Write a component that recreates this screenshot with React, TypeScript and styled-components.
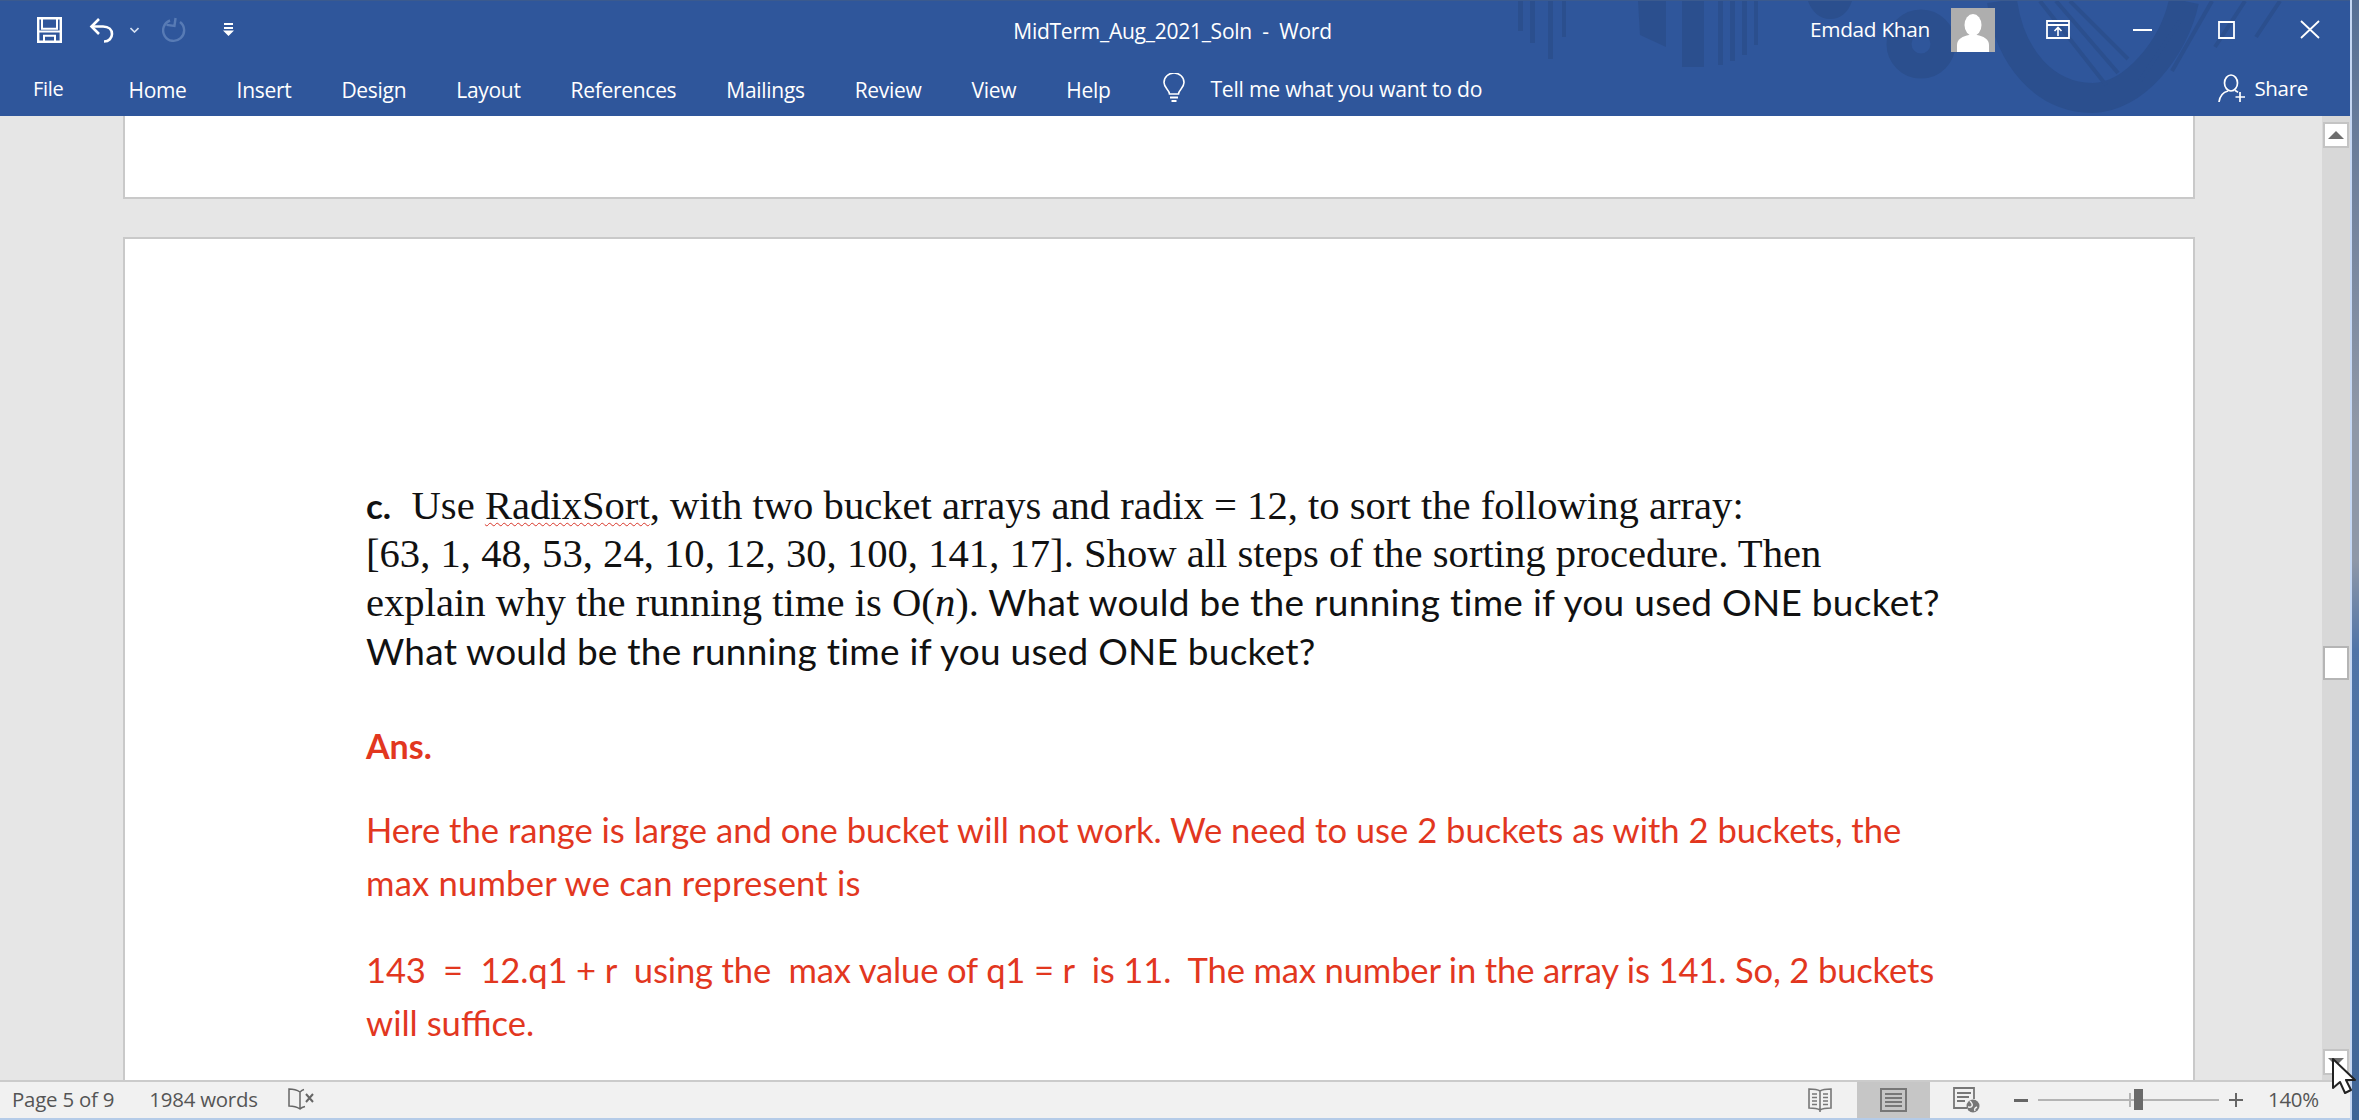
import React from 'react';
import styled, { createGlobalStyle } from 'styled-components';

const GlobalStyle = createGlobalStyle`
  html, body { margin: 0; padding: 0; background: #4a6b9a; overflow: hidden; }
  #root { width: 2359px; height: 1120px; }
`;

const Screen = styled.div`
  position: relative;
  display: grid;
  grid-template-columns: 2352px 7px;
  width: 2359px;
  height: 1120px;
  overflow: hidden;
`;

const DesktopEdge = styled.div`
  background: linear-gradient(180deg, #566f94 0%, #8f98a8 38%, #8f98a8 50%, #4f74a8 58%, #3f6596 100%);
`;

const WordWindow = styled.div`
  display: flex;
  flex-direction: column;
  height: 1120px;
  border-right: 2px solid #c4d6f2;
  box-sizing: border-box;
`;

const Header = styled.header`
  position: relative;
  height: 116px;
  flex: none;
  background: #2f569b;
  border-top: 1px solid #3b5a8e;
  box-sizing: border-box;
  color: #fff;
  font-family: 'Open Sans', 'Liberation Sans', sans-serif;
  overflow: hidden;
`;

const Art = styled.svg`
  position: absolute;
  left: 1500px;
  top: 0;
`;

const TitleRow = styled.div`
  position: relative;
  height: 57px;
  display: grid;
  grid-template-columns: 1fr auto 1fr;
  align-items: center;
`;

const QuickAccess = styled.div`
  display: flex;
  align-items: center;
  padding-left: 37px;
`;

const QatIcon = styled.svg<{ $ml: number }>`
  display: block;
  margin-left: ${(p) => p.$ml}px;
`;

const DocTitle = styled.div`
  font-size: 21px;
  letter-spacing: -0.25px;
  white-space: pre;
  padding: 2px 5px 0 0;
`;

const WindowControls = styled.div`
  display: flex;
  align-items: center;
  justify-content: flex-end;
  padding-right: 30px;
`;

const UserName = styled.span`
  font-size: 20.8px;
  letter-spacing: -0.3px;
  margin: -2px 21px 0 0;
`;

const Avatar = styled.svg`
  display: block;
  margin-right: 51px;
`;

const WinIcon = styled.svg<{ $mr: number }>`
  display: block;
  margin-right: ${(p) => p.$mr}px;
`;

const TabRow = styled.div`
  position: relative;
  height: 58px;
  display: flex;
  align-items: center;
  padding: 2px 0 0 33px;
  box-sizing: border-box;
`;

const FileTab = styled.span`
  font-size: 20px;
  letter-spacing: -0.3px;
  margin-right: 65px;
`;

const Tabs = styled.nav`
  display: flex;
  gap: 50px;
  margin-top: 3px;
`;

const Tab = styled.span`
  font-size: 21px;
  letter-spacing: -0.3px;
`;

const TellMe = styled.div`
  display: flex;
  align-items: center;
  gap: 24px;
  margin-left: 52px;
  font-size: 21.2px;
  letter-spacing: -0.25px;
`;

const ShareButton = styled.div`
  margin-left: auto;
  display: flex;
  align-items: center;
  gap: 7px;
  padding-right: 42px;
  font-size: 20.5px;
  letter-spacing: -0.3px;
`;

const Body = styled.div`
  flex: 1;
  min-height: 0;
  display: flex;
  overflow: hidden;
`;

const Canvas = styled.main`
  flex: 1;
  min-width: 0;
  padding-left: 123px;
  background: #e6e6e6;
  overflow: hidden;
`;

const PageTail = styled.div`
  box-sizing: border-box;
  width: 2072px;
  height: 83px;
  margin-bottom: 38px;
  background: #fff;
  border: 2px solid #c9c9c9;
  border-top: none;
`;

const Page = styled.article`
  box-sizing: border-box;
  width: 2072px;
  height: 1100px;
  background: #fff;
  border: 2px solid #c9c9c9;
  padding: 242px 0 0 241px;
`;

const SerifLine = styled.div`
  font-family: 'Liberation Serif', 'Times New Roman', serif;
  font-size: 40.65px;
  line-height: 48.5px;
  height: 48.5px;
  color: #111;
  white-space: pre;
`;

const Bold = styled.b`
  font-family: Lato, 'Open Sans', sans-serif;
  font-size: 35px;
`;

const Spelled = styled.span`
  text-decoration: underline wavy #d8362a 1px;
  text-underline-offset: 3px;
`;

const Sans = styled.span`
  font-family: Lato, 'Open Sans', sans-serif;
  font-size: 37px;
  letter-spacing: 0.28px;
`;

const SansLine = styled.div`
  font-family: Lato, 'Open Sans', sans-serif;
  font-size: 37px;
  letter-spacing: 0.24px;
  line-height: 48.5px;
  color: #111;
  white-space: pre;
`;

const AnsLabel = styled.div`
  font-family: Lato, 'Open Sans', sans-serif;
  font-size: 34px;
  font-weight: 700;
  line-height: 48px;
  color: #e2371f;
  margin-top: 47px;
`;

const AnswerBlock = styled.div<{ $mt: number }>`
  margin-top: ${(p) => p.$mt}px;
`;

const RedLine = styled.div<{ $spacing?: number }>`
  font-family: Lato, 'Open Sans', sans-serif;
  font-size: 34.6px;
  letter-spacing: ${(p) => p.$spacing ?? 0}px;
  line-height: 53px;
  color: #e2371f;
  white-space: pre;
`;

const Scrollbar = styled.aside`
  width: 28px;
  flex: none;
  box-sizing: border-box;
  padding: 6px 1px 5px;
  display: flex;
  flex-direction: column;
  align-items: center;
  background: #d8d8d8;
`;

const ScrollButton = styled.div`
  box-sizing: border-box;
  width: 26px;
  height: 26px;
  flex: none;
  display: flex;
  align-items: center;
  justify-content: center;
  background: #fff;
  border: 2px solid #c4c4c4;
`;

const ScrollThumb = styled.div`
  box-sizing: border-box;
  width: 26px;
  height: 34px;
  flex: none;
  margin: 498px 0 auto;
  background: #fff;
  border: 2px solid #b5b5b5;
`;

const StatusBar = styled.footer`
  height: 40px;
  flex: none;
  box-sizing: border-box;
  display: flex;
  align-items: stretch;
  background: #f1f1f1;
  border-top: 2px solid #cbcbcb;
  border-bottom: 2px solid #b4cbe8;
  font-family: 'Open Sans', 'Liberation Sans', sans-serif;
  font-size: 20.4px;
  letter-spacing: -0.2px;
  color: #555;
`;

const StatusLeft = styled.div`
  display: flex;
  align-items: center;
  padding: 0 0 3px 12px;
`;

const StatusText = styled.span<{ $mr: number }>`
  margin-right: ${(p) => p.$mr}px;
`;

const StatusRight = styled.div`
  margin-left: auto;
  display: flex;
  align-items: center;
`;

const ViewButton = styled.div<{ $active?: boolean }>`
  width: 73px;
  align-self: stretch;
  display: flex;
  align-items: center;
  justify-content: center;
  background: ${(p) => (p.$active ? '#c6c6c6' : 'transparent')};
`;

const ZoomSign = styled.svg<{ $ml: number }>`
  display: block;
  margin-left: ${(p) => p.$ml}px;
`;

const ZoomTrack = styled.div`
  position: relative;
  width: 181px;
  height: 2px;
  margin-left: 10px;
  background: #b4b4b4;
`;

const ZoomTick = styled.div`
  position: absolute;
  left: 91px;
  top: -6px;
  width: 2px;
  height: 14px;
  background: #b4b4b4;
`;

const ZoomThumb = styled.div`
  position: absolute;
  left: 96px;
  top: -10px;
  width: 9px;
  height: 21px;
  background: #6a6a6a;
`;

const ZoomValue = styled.span`
  margin: -3px 31px 0 25px;
`;

const Cursor = styled.svg`
  position: absolute;
  left: 2331px;
  top: 1058px;
`;

const TABS = ['Home', 'Insert', 'Design', 'Layout', 'References', 'Mailings', 'Review', 'View', 'Help'];

export default function App() {
  return (
    <>
      <GlobalStyle />
      <Screen>
        <WordWindow>
          <Header>
            <Art width="852" height="116" viewBox="0 0 852 116">
              <g fill="#2b4f8e">
                <rect x="18" y="0" width="5" height="30" />
                <rect x="30" y="0" width="5" height="42" />
                <rect x="48" y="0" width="5" height="58" />
                <rect x="62" y="0" width="4" height="36" />
                <path d="M138 0h28v46l-26-12z" />
                <rect x="182" y="0" width="22" height="66" />
                <rect x="218" y="0" width="5" height="64" />
                <rect x="230" y="0" width="5" height="60" />
                <rect x="242" y="0" width="5" height="54" />
                <rect x="254" y="0" width="4" height="44" />
                <path d="M308 0h44c-4 12-12 18-22 18s-18-7-22-18z" />
              </g>
              <g fill="none" stroke="#2b4f8e">
                <circle cx="421" cy="43" r="22" strokeWidth="25" />
                <path d="M502 0C510 58 545 96 592 97c42 0 82-50 92-97" strokeWidth="30" />
                <path d="M540 0l66 84M556 0l62 72M570 0l58 58M680 20l-40 60M712 0l-40 70M745 0l-30 46M780 0l-24 36" strokeWidth="4" />
              </g>
            </Art>
            <TitleRow>
              <QuickAccess>
                <QatIcon $ml={0} width="25" height="26" viewBox="0 0 25 26" fill="none" stroke="#fff" strokeWidth="2.4">
                  <path d="M1.2 1.2h22.6v23.6H1.2z" />
                  <path d="M5 1.2v10.6h15V1.2M1.2 14.5h22.6M7 24.8v-6h11v6" strokeWidth="2" />
                </QatIcon>
                <QatIcon $ml={27} width="27" height="26" viewBox="0 0 27 26" fill="none" stroke="#fff" strokeWidth="2.6">
                  <path d="M10 2 2.5 9.5 10 17" />
                  <path d="M3 9.5h11c6 0 9 3.5 9 7.5s-3 7.5-8 7.5" />
                </QatIcon>
                <QatIcon $ml={14} width="9" height="6" viewBox="0 0 9 6" fill="none" stroke="#d5e0f2" strokeWidth="1.6">
                  <path d="M.5 1l4 4 4-4" />
                </QatIcon>
                <QatIcon $ml={23} width="24" height="26" viewBox="0 0 24 26" fill="none" stroke="#587bb5" strokeWidth="2.4">
                  <path d="M8 3.5A10.5 10.5 0 1 0 18 5" />
                  <path d="M13 1v8h-8" transform="rotate(8 13 5)" />
                </QatIcon>
                <QatIcon $ml={37} width="11" height="13" viewBox="0 0 11 13" fill="#fff">
                  <path d="M1 0h9v2H1zM1 4h9v2H1zM0 7.5h11L5.5 13z" />
                </QatIcon>
              </QuickAccess>
              <DocTitle>MidTerm_Aug_2021_Soln  -  Word</DocTitle>
              <WindowControls>
                <UserName>Emdad Khan</UserName>
                <Avatar width="44" height="44" viewBox="0 0 44 44">
                  <rect width="44" height="44" fill="#aeaeae" />
                  <ellipse cx="22" cy="17" rx="8.5" ry="11" fill="#fff" />
                  <path d="M6 44V37c0-6 6-9 12-10h8c6 1 12 4 12 10v7z" fill="#fff" />
                </Avatar>
                <WinIcon $mr={63} width="24" height="19" viewBox="0 0 24 19" fill="none" stroke="#fff" strokeWidth="1.8">
                  <path d="M1 1h22v17H1zM1 5h22" />
                  <path d="M12 16V8M8.5 11 12 7.5l3.5 3.5" strokeWidth="1.6" />
                </WinIcon>
                <WinIcon $mr={66} width="19" height="2" viewBox="0 0 19 2" fill="#fff">
                  <rect width="19" height="2" />
                </WinIcon>
                <WinIcon $mr={65} width="17" height="18" viewBox="0 0 17 18" fill="none" stroke="#fff" strokeWidth="1.8">
                  <path d="M1 1h15v16H1z" />
                </WinIcon>
                <svg width="20" height="19" viewBox="0 0 20 19" fill="none" stroke="#fff" strokeWidth="1.8">
                  <path d="M1 1l18 17M19 1 1 18" />
                </svg>
              </WindowControls>
            </TitleRow>
            <TabRow>
              <FileTab>File</FileTab>
              <Tabs>
                {TABS.map((t) => (
                  <Tab key={t}>{t}</Tab>
                ))}
              </Tabs>
              <TellMe>
                <svg width="24" height="30" viewBox="0 0 24 30" fill="none" stroke="#fff" strokeWidth="1.6">
                  <path d="M7.5 21c0-4-5.5-6-5.5-11.5a10 9.5 0 0 1 20 0C22 15 16.5 17 16.5 21z" />
                  <path d="M8 24.5h8M9.5 28h5" strokeWidth="2" />
                </svg>
                <span>Tell me what you want to do</span>
              </TellMe>
              <ShareButton>
                <svg width="29" height="29" viewBox="0 0 29 29" fill="none" stroke="#fff" strokeWidth="1.7">
                  <ellipse cx="13" cy="9" rx="6.5" ry="8" />
                  <path d="M1 28c1-7 5-10 9-11M17 16.5c1 .4 2 1 3 1.8M22 18v10M17.5 23h9.500" />
                </svg>
                <span>Share</span>
              </ShareButton>
            </TabRow>
          </Header>
          <Body>
            <Canvas>
              <PageTail />
              <Page>
                <SerifLine>
                  <Bold>c.</Bold>
                  {'  Use '}
                  <Spelled>RadixSort</Spelled>
                  {', with two bucket arrays and radix = 12, to sort the following array:'}
                </SerifLine>
                <SerifLine>[63, 1, 48, 53, 24, 10, 12, 30, 100, 141, 17]. Show all steps of the sorting procedure. Then</SerifLine>
                <SerifLine>
                  explain why the running time is O(<i>n</i>).
                  <Sans> What would be the running time if you used ONE bucket?</Sans>
                </SerifLine>
                <SansLine>What would be the running time if you used ONE bucket?</SansLine>
                <AnsLabel>Ans.</AnsLabel>
                <AnswerBlock $mt={33}>
                  <RedLine>Here the range is large and one bucket will not work. We need to use 2 buckets as with 2 buckets, the</RedLine>
                  <RedLine $spacing={0.2}>max number we can represent is</RedLine>
                </AnswerBlock>
                <AnswerBlock $mt={34}>
                  <RedLine $spacing={-0.15}>143  =  12.q1 + r  using the  max value of q1 = r  is 11.  The max number in the array is 141. So, 2 buckets</RedLine>
                  <RedLine>will suffice.</RedLine>
                </AnswerBlock>
              </Page>
            </Canvas>
            <Scrollbar>
              <ScrollButton>
                <svg width="16" height="8" viewBox="0 0 16 8" fill="#6e6e6e"><path d="M8 0l8 8H0z" /></svg>
              </ScrollButton>
              <ScrollThumb />
              <ScrollButton>
                <svg width="16" height="8" viewBox="0 0 16 8" fill="#6e6e6e"><path d="M0 0h16L8 8z" /></svg>
              </ScrollButton>
            </Scrollbar>
          </Body>
          <StatusBar>
            <StatusLeft>
              <StatusText $mr={35}>Page 5 of 9</StatusText>
              <StatusText $mr={30}>1984 words</StatusText>
              <svg width="27" height="24" viewBox="0 0 27 24" fill="none" stroke="#666" strokeWidth="1.5">
                <path d="M12 5C9 3 5 2 1 2v17c4 0 8 1 11 3 1-1 3-2 5-2.5M12 5v17M12 5c1-1 2-2 4-2.500" />
                <path d="M18 7l7 8M25 7l-7 8" strokeWidth="2" />
              </svg>
            </StatusLeft>
            <StatusRight>
              <ViewButton>
                <svg width="24" height="26" viewBox="0 0 24 26" fill="none" stroke="#777" strokeWidth="1.6">
                  <path d="M1 2c4 0 8 0 11 2 3-2 7-2 11-2v19c-4 0-8 0-11 2-3-2-7-2-11-2zM12 4v21" />
                  <path d="M4 7h5M4 10.500h5M4 14h5M4 17.500h5M15 7h5M15 10.500h5M15 14h5M15 17.500h5" />
                </svg>
              </ViewButton>
              <ViewButton $active>
                <svg width="27" height="24" viewBox="0 0 27 24" fill="none" stroke="#777" strokeWidth="2">
                  <path d="M1 1h25v22H1z" />
                  <path d="M5 6h17M5 10h17M5 14h17M5 18h17" />
                </svg>
              </ViewButton>
              <ViewButton>
                <svg width="27" height="26" viewBox="0 0 27 26" fill="none" stroke="#777" strokeWidth="1.8">
                  <path d="M14 21H1V1h20v11M4 6h14M4 10h12M4 14h8" />
                  <circle cx="20" cy="19" r="6.5" fill="#777" stroke="none" />
                  <path d="M17 14c2 2 3 3 2 5s-3 1-4 1M22 24c-1-2 0-3 2-4" stroke="#f1f1f1" strokeWidth="1.5" />
                </svg>
              </ViewButton>
              <ZoomSign $ml={11} width="14" height="3" viewBox="0 0 14 3" fill="#666">
                <rect width="14" height="3" />
              </ZoomSign>
              <ZoomTrack>
                <ZoomTick />
                <ZoomThumb />
              </ZoomTrack>
              <ZoomSign $ml={10} width="14" height="14" viewBox="0 0 14 14" fill="#666">
                <path d="M6 0h2v6h6v2H8v6H6V8H0V6h6z" />
              </ZoomSign>
              <ZoomValue>140%</ZoomValue>
            </StatusRight>
          </StatusBar>
        </WordWindow>
        <DesktopEdge />
        <Cursor width="26" height="38" viewBox="0 0 26 38">
          <path d="M2 1v29l7-6 5 11 6-3-5-10h9z" fill="#fff" stroke="#222" strokeWidth="2" strokeLinejoin="round" />
        </Cursor>
      </Screen>
    </>
  );
}
